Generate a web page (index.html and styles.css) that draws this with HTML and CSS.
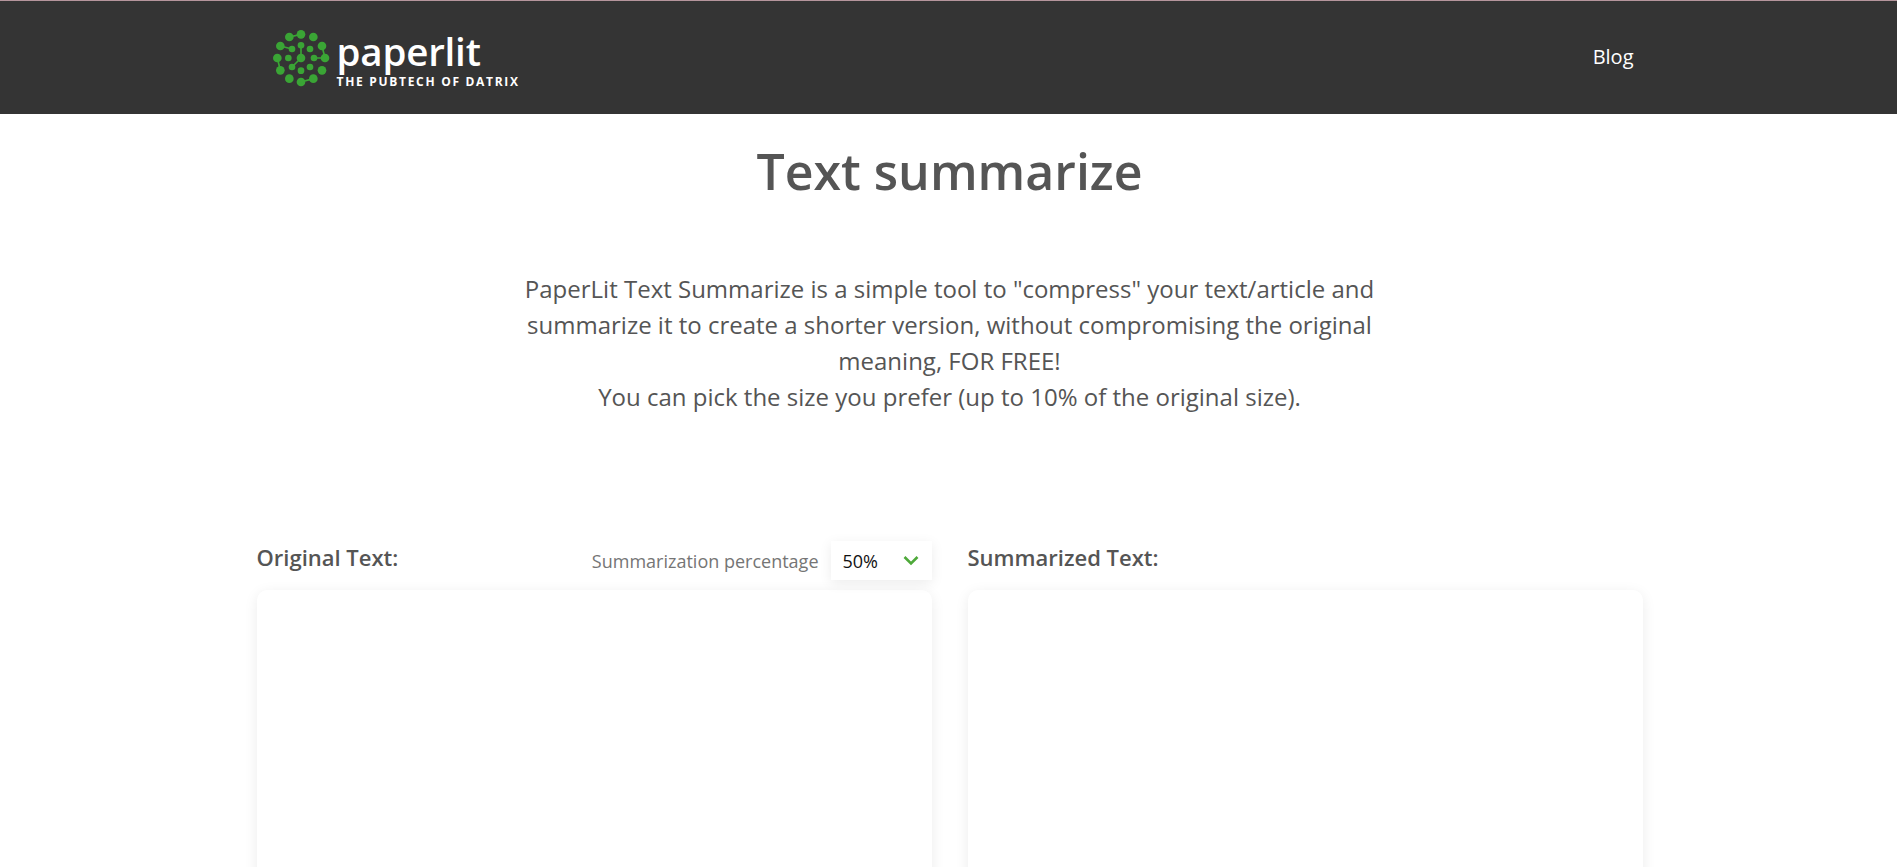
FILE: index.html
```html
<!DOCTYPE html>
<html lang="en">
<head>
  <meta charset="UTF-8">
  <meta name="viewport" content="width=device-width, initial-scale=1.0">
  <title>PaperLit Text Summarize</title>
  <link rel="stylesheet" href="styles.css">
</head>
<body>
  <header class="navbar">
    <div class="navbar-inner">
      <a class="logo" href="#">
        <svg class="logo-mark" viewBox="0 0 240 210" aria-hidden="true">
          <g stroke="#3aa535" stroke-width="5">
            <path d="M73 48L108 40M46 75L81 84M108 73V111M147 111H180M171 75L180 111M37 111L46 148M81 138L108 111M108 183L145 173" fill="none"/>
          </g>
          <g fill="#3aa535">
            <circle cx="73" cy="48" r="13"/><circle cx="108" cy="40" r="13"/><circle cx="145" cy="48" r="13"/>
            <circle cx="171" cy="75" r="13"/><circle cx="180" cy="111" r="13"/><circle cx="171" cy="148" r="13"/>
            <circle cx="145" cy="173" r="13"/><circle cx="108" cy="183" r="13"/><circle cx="73" cy="173" r="13"/>
            <circle cx="46" cy="148" r="13"/><circle cx="37" cy="111" r="13"/><circle cx="46" cy="75" r="13"/>
            <circle cx="108" cy="73" r="10"/><circle cx="135" cy="84" r="10"/><circle cx="147" cy="111" r="10"/>
            <circle cx="135" cy="138" r="10"/><circle cx="108" cy="149" r="10"/><circle cx="81" cy="138" r="10"/>
            <circle cx="70" cy="111" r="10"/><circle cx="81" cy="84" r="10"/><circle cx="108" cy="111" r="13"/>
          </g>
        </svg>
        <span class="logo-text">
          <span class="logo-name">paperlit</span>
          <span class="logo-tag">THE PUBTECH OF DATRIX</span>
        </span>
      </a>
      <a class="nav-link" href="#">Blog</a>
    </div>
  </header>

  <main class="container">
    <h1>Text summarize</h1>
    <p class="intro">
      PaperLit Text Summarize is a simple tool to "compress" your text/article and summarize it to create a shorter version, without compromising the original meaning, FOR FREE!<br>
      You can pick the size you prefer (up to 10% of the original size).
    </p>

    <div class="columns">
      <section class="column">
        <div class="column-head">
          <h2>Original Text:</h2>
          <div class="percentage">
            <span class="percentage-label">Summarization percentage</span>
            <div class="select">
              <span>50%</span>
              <svg class="chevron" viewBox="0 0 16 11" aria-hidden="true">
                <path d="M1.5 2L8 8.5L14.5 2" fill="none" stroke="#4ea93a" stroke-width="2.6"/>
              </svg>
            </div>
          </div>
        </div>
        <div class="text-box"></div>
      </section>
      <section class="column">
        <div class="column-head">
          <h2>Summarized Text:</h2>
        </div>
        <div class="text-box"></div>
      </section>
    </div>
  </main>
</body>
</html>
```

FILE: styles.css
```css
* {
  margin: 0;
  padding: 0;
  box-sizing: border-box;
}
html, body {
  height: 100%;
  overflow: hidden;
}
body {
  font-family: "Open Sans", Arial, sans-serif;
  background-color: #fff;
  color: #555;
}
a {
  text-decoration: none;
  color: #fff;
}
.navbar {
  height: 114px;
  background: #343434;
  border-top: 1px solid #b5959c;
}
.navbar-inner {
  width: 1388px;
  margin: 0 auto;
  height: 100%;
  display: flex;
  justify-content: space-between;
  align-items: center;
  padding: 0 9px 0 10px;
}
.logo {
  display: flex;
  align-items: flex-start;
  margin-top: 2px;
}
.logo-mark {
  width: 80px;
  height: 70px;
  margin-top: -5px;
}
.logo-text {
  display: flex;
  flex-direction: column;
  margin-left: -8px;
  margin-top: 7px;
}
.logo-name {
  font-size: 38.5px;
  font-weight: 600;
  line-height: 36px;
  letter-spacing: -0.2px;
}
.logo-tag {
  font-size: 12px;
  font-weight: 700;
  line-height: 14px;
  letter-spacing: 1.7px;
  margin-top: 6px;
}
.nav-link {
  font-size: 20px;
  margin-top: -2px;
}
.container {
  width: 1388px;
  margin: 0 auto;
}
h1 {
  font-size: 50px;
  font-weight: 600;
  line-height: 66px;
  text-align: center;
  margin-top: 24px;
  padding-left: 2px;
}
.intro {
  width: 872px;
  margin: 67px auto 0;
  padding-left: 2px;
  font-size: 24px;
  line-height: 36px;
  text-align: center;
}
.columns {
  display: flex;
  gap: 36px;
  margin-top: 126px;
  padding-left: 2px;
}
.column {
  flex: 1;
}
.column-head {
  display: flex;
  justify-content: space-between;
  height: 49px;
}
h2 {
  font-size: 22px;
  font-weight: 600;
  line-height: 32px;
}
.percentage {
  display: flex;
  align-items: flex-start;
  gap: 12px;
}
.percentage-label {
  font-size: 18px;
  line-height: 40px;
  color: #757575;
}
.select {
  width: 101px;
  height: 39px;
  padding: 0 13px 0 12px;
  display: flex;
  justify-content: space-between;
  align-items: center;
  font-size: 18px;
  color: #111;
  background: #fff;
  box-shadow: 0 3px 12px rgba(0, 0, 0, 0.08);
}
.chevron {
  width: 16px;
  height: 11px;
}
.text-box {
  height: 420px;
  background: #fff;
  border-radius: 10px;
  box-shadow: 0 3px 14px rgba(0, 0, 0, 0.08);
}
```
